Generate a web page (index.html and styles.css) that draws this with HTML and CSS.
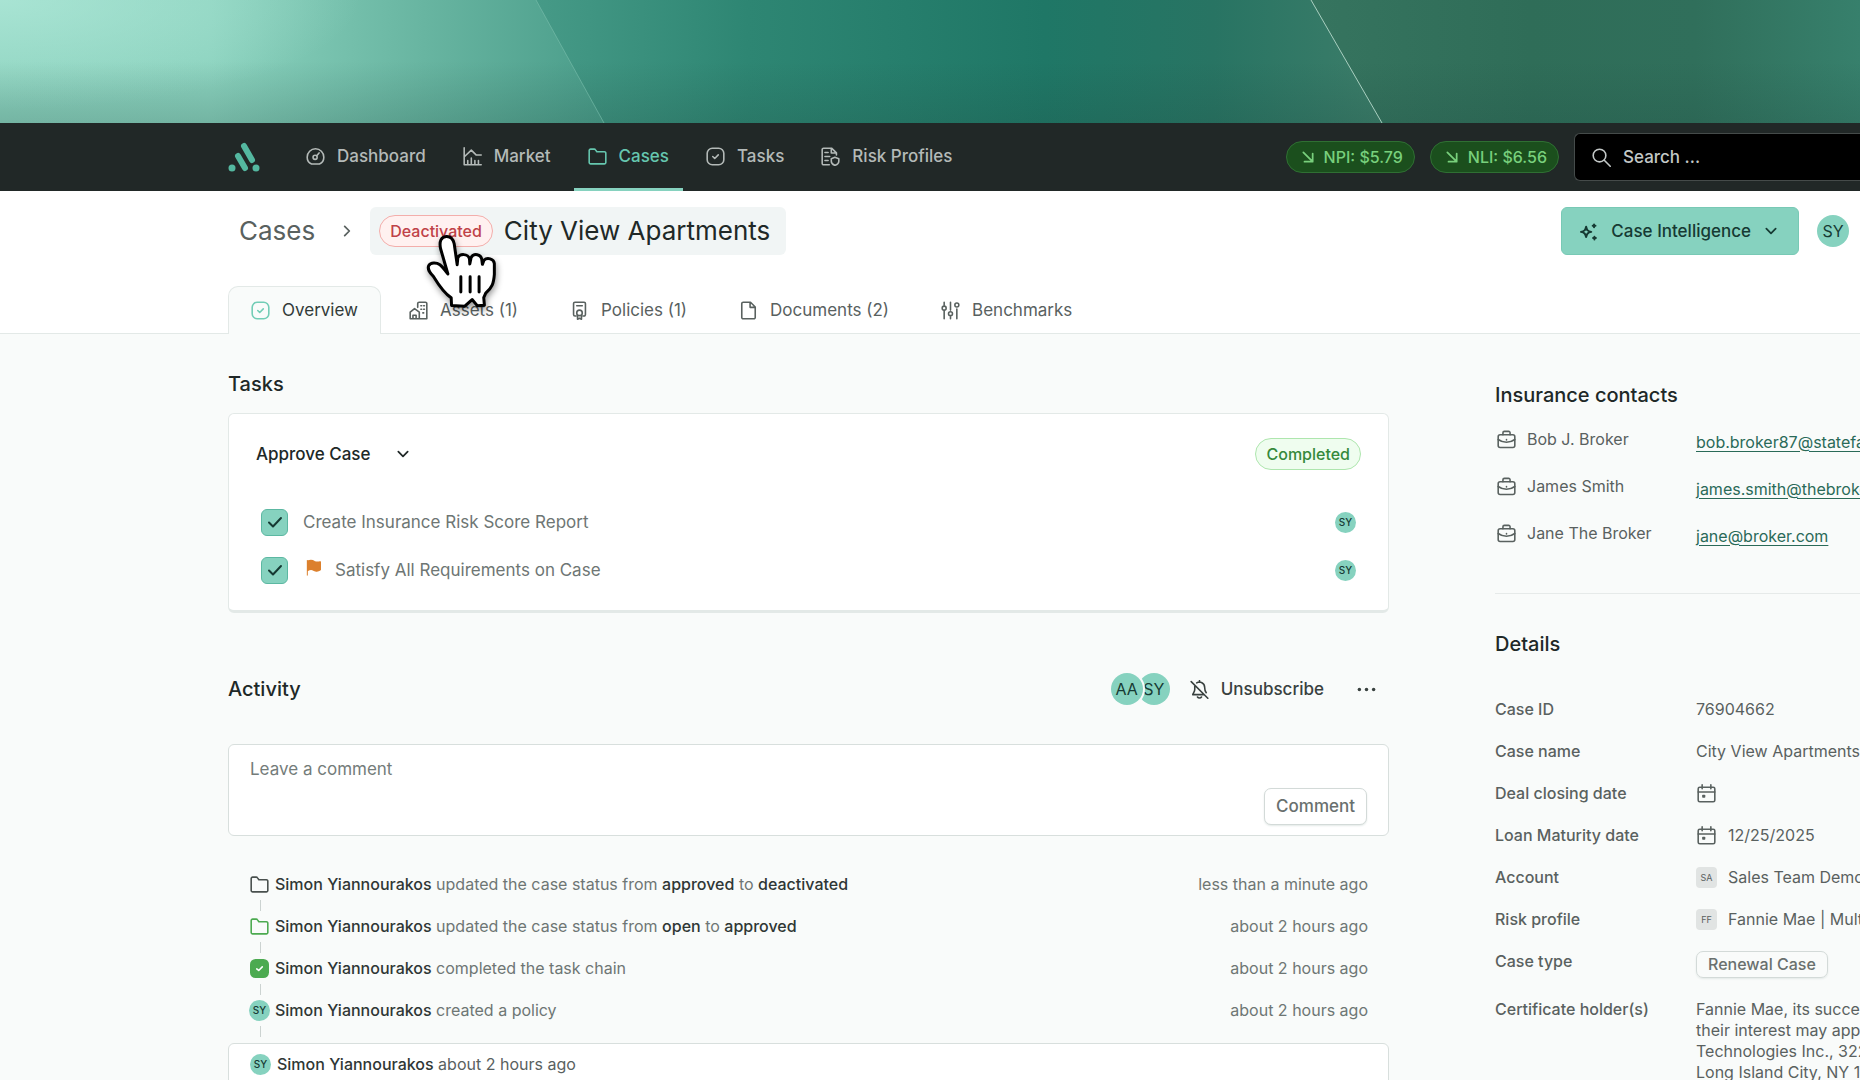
FILE: index.html
```html
<!DOCTYPE html>
<html lang="en">
<head>
    <meta charset="UTF-8">
    <meta name="viewport" content="width=device-width, initial-scale=1.0">
    <title>City View Apartments</title>
    <link rel="stylesheet" href="styles.css">
</head>
<body>
    <svg class="sprite" aria-hidden="true">
        <symbol id="gauge" viewBox="0 0 24 24"><path d="M7 21.5h10a9.5 9.5 0 0 0 5.5-8.700A10.500 10.500 0 0 0 1.500 12.800a9.500 9.500 0 0 0 5.500 8.700z"/><circle cx="11.500" cy="13" r="2.600"/><path d="M13.500 11l3-3.500"/></symbol>
        <symbol id="market" viewBox="0 0 24 24"><path d="M1.500 1v21.500H23M2 12l8.500-8 6 6H23M6 22v-5M10.500 22v-8M15 22v-5M19.500 22v-5"/></symbol>
        <symbol id="folder" viewBox="0 0 24 24"><path d="M1.500 19.500v-15a1.800 1.800 0 0 1 1.800-1.800h4.500a2 2 0 0 1 1.700.900l1.700 2.400h9.500a1.800 1.800 0 0 1 1.800 1.800v11.700a1.800 1.800 0 0 1-1.800 1.800H3.300a1.800 1.800 0 0 1-1.800-1.800z"/></symbol>
        <symbol id="check-box" viewBox="0 0 24 24"><rect x="1.500" y="1.500" width="21" height="21" rx="6.500"/><path d="M8.500 12l2.500 2.500 4.500-4.500"/></symbol>
        <symbol id="risk" viewBox="0 0 24 24"><path d="M10.500 22.500H3.300a1.800 1.800 0 0 1-1.800-1.800V3.300a1.800 1.800 0 0 1 1.800-1.800h10L19.500 7.500V10M13 2v5.500h6M5 7h4M5 12h6M5 17h4M17.500 13l5 1.700v3.300c0 2.500-2 4.200-5 5.200-3-1-4.500-2.700-4.500-5.200v-3.300z"/></symbol>
        <symbol id="arrow" viewBox="0 0 24 24"><path d="M4 4l16 16M20 6v14H6"/></symbol>
        <symbol id="search" viewBox="0 0 24 24"><circle cx="9.500" cy="9.500" r="8"/><path d="M15.500 15.500l7.500 7.500"/></symbol>
        <symbol id="chevron-right" viewBox="0 0 24 24"><path d="M8 4l8 8-8 8"/></symbol>
        <symbol id="chevron-down" viewBox="0 0 24 24"><path d="M4 8l8 8 8-8"/></symbol>
        <symbol id="sparkle" viewBox="0 0 24 24"><path d="M9 6c1 4.500 2 5.500 6.500 6.500C11 13.500 10 14.500 9 19c-1-4.500-2-5.500-6.500-6.500C7 11.500 8 10.500 9 6z" stroke-width="2.500"/><path d="M19 3v3.500M17.300 4.800h3.500M19.500 18.500v3.500M17.800 20.300h3.500" stroke-width="2.500"/></symbol>
        <symbol id="buildings" viewBox="0 0 24 24"><path d="M11 8V3.300a1.800 1.800 0 0 1 1.800-1.800h7.900a1.800 1.800 0 0 1 1.800 1.800v19.200h-21V14l5.500-4.500L13 14v8.500M5 22v-4h4v4"/><path d="M15 6h1M18.500 6h1M15 10.500h1M18.500 10.500h1M17.500 15h1"/></symbol>
        <symbol id="policy" viewBox="0 0 24 24"><path d="M7.500 19H6.300a1.800 1.800 0 0 1-1.800-1.800V3.300a1.800 1.800 0 0 1 1.800-1.800h11.400a1.800 1.800 0 0 1 1.800 1.800v13.900a1.800 1.800 0 0 1-1.800 1.800H16.500M8.500 6h7M9.500 18V23l2.500-1.300 2.500 1.300v-5"/><circle cx="12" cy="15" r="3.500"/></symbol>
        <symbol id="document" viewBox="0 0 24 24"><path d="M3.500 20.700V3.300a1.800 1.800 0 0 1 1.800-1.800h9.200l6 6v13.200a1.800 1.800 0 0 1-1.800 1.800H5.300a1.800 1.800 0 0 1-1.800-1.800zM14 2v6h6"/></symbol>
        <symbol id="sliders" viewBox="0 0 24 24"><path d="M4 1.500v4M4 12.500v10M12 1.500v10M12 20v2.500M20 10v12.500"/><circle cx="4" cy="9" r="2.500"/><circle cx="12" cy="16" r="2.500"/><circle cx="20" cy="5" r="2.500"/></symbol>
        <symbol id="flag" viewBox="0 0 24 24"><path d="M2 23.500V1.500" stroke-width="1.500"/><path d="M2.500 2.500c5-2.500 8-1 10 .500 2 1.300 5 1.500 9 .500v12c-4 3-7.500 2-10 .500S6.500 14 2.500 16.500z" fill="currentColor"/></symbol>
        <symbol id="bell-off" viewBox="0 0 24 24"><path d="M1.500 2l21 21M6 7.500V12c0 3-2 4.500-2.500 6.500H17M8.500 3.700A6.500 6.500 0 0 1 18.500 9c0 3.500.500 5 2 7M12 .800v2M9.500 21.500a3 3 0 0 0 5 0"/></symbol>
        <symbol id="dots" viewBox="0 0 24 24"><g fill="currentColor" stroke="none"><circle cx="3" cy="12" r="2.200"/><circle cx="12" cy="12" r="2.200"/><circle cx="21" cy="12" r="2.200"/></g></symbol>
        <symbol id="briefcase" viewBox="0 0 24 24"><rect x="1.500" y="6" width="21" height="16" rx="2.500"/><path d="M7.500 6V3.500A1.800 1.800 0 0 1 9.300 1.700h5.400a1.800 1.800 0 0 1 1.800 1.800V6M1.500 12c6 4.500 15 4.500 21 0M12 12v.500"/></symbol>
        <symbol id="calendar" viewBox="0 0 24 24"><rect x="1.500" y="4" width="21" height="18.500" rx="2"/><path d="M1.500 10h21M6.500 1v5M17.500 1v5"/><path d="M7.500 14.500h2v2h-2z" fill="currentColor"/></symbol>
        <symbol id="done" viewBox="0 0 24 24"><rect width="24" height="24" rx="7" fill="#4caa50" stroke="none"/><path d="M8.500 12.500l2.500 2 4.500-4.500" stroke="#fff"/></symbol>
    </svg>

    <div class="banner">
        <svg class="banner-art" viewBox="0 0 1860 123" preserveAspectRatio="none" aria-hidden="true">
            <defs>
                <linearGradient id="light" x1="0" x2="1">
                    <stop offset="0" stop-color="#8dd3bf"/>
                    <stop offset="0.35" stop-color="#8bd2be"/>
                    <stop offset="0.7" stop-color="#68b5a1"/>
                    <stop offset="1" stop-color="#4a9d8a"/>
                </linearGradient>
                <linearGradient id="mid" x1="0" x2="1">
                    <stop offset="0" stop-color="#469a87"/>
                    <stop offset="0.25" stop-color="#2e8673"/>
                    <stop offset="0.6" stop-color="#1f7766"/>
                    <stop offset="0.8" stop-color="#287463"/>
                    <stop offset="1" stop-color="#3c7d69"/>
                </linearGradient>
                <linearGradient id="dark" x1="0" x2="1">
                    <stop offset="0" stop-color="#36745f"/>
                    <stop offset="0.4" stop-color="#2f6d58"/>
                    <stop offset="0.7" stop-color="#306f5b"/>
                    <stop offset="1" stop-color="#37806c"/>
                </linearGradient>
                <linearGradient id="shade" x1="0" y1="0" x2="0" y2="1">
                    <stop offset="0.5" stop-color="#1d4a40" stop-opacity="0"/>
                    <stop offset="1" stop-color="#1d4a40" stop-opacity="0.22"/>
                </linearGradient>
                <radialGradient id="glow" cx="0" cy="0" r="1">
                    <stop offset="0" stop-color="#b4ebdc" stop-opacity="0.7"/>
                    <stop offset="1" stop-color="#b4ebdc" stop-opacity="0"/>
                </radialGradient>
            </defs>
            <path d="M0 0H537L605 123H0z" fill="url(#light)"/>
            <path d="M536 0H1312L1383 123H604z" fill="url(#mid)"/>
            <path d="M1311 0H1860V123H1382z" fill="url(#dark)"/>
            <rect width="360" height="110" fill="url(#glow)"/>
            <rect width="1860" height="123" fill="url(#shade)"/>
            <path d="M536 0L604 123" stroke="#7cc0ae" stroke-opacity="0.6"/>
            <path d="M1311 0L1382 123" stroke="#a9cfc0"/>
        </svg>
    </div>

    <header class="topbar">
        <a class="logo" href="#" aria-label="Home">
            <svg viewBox="0 0 32 30" aria-hidden="true">
                <path d="M16 4l8 14M10 14l7 12" stroke="#54b8a0" stroke-width="6" stroke-linecap="round"/>
                <circle cx="4" cy="26" r="3.500" fill="#54b8a0"/>
                <circle cx="28" cy="26" r="3.500" fill="#54b8a0"/>
            </svg>
        </a>
        <nav class="nav">
            <a class="nav-link" href="#"><svg class="icon"><use href="#gauge"/></svg>Dashboard</a>
            <a class="nav-link" href="#"><svg class="icon"><use href="#market"/></svg>Market</a>
            <a class="nav-link active" href="#"><svg class="icon"><use href="#folder"/></svg>Cases</a>
            <a class="nav-link" href="#"><svg class="icon"><use href="#check-box"/></svg>Tasks</a>
            <a class="nav-link" href="#"><svg class="icon"><use href="#risk"/></svg>Risk Profiles</a>
        </nav>
        <div class="topbar-right">
            <span class="rate"><svg class="icon small"><use href="#arrow"/></svg>NPI: $5.79</span>
            <span class="rate"><svg class="icon small"><use href="#arrow"/></svg>NLI: $6.56</span>
            <label class="search">
                <svg class="icon"><use href="#search"/></svg>
                <input type="search" placeholder="Search ..." aria-label="Search">
            </label>
        </div>
    </header>

    <div class="page-head">
        <div class="title-row">
            <a class="crumb" href="#">Cases</a>
            <svg class="icon small"><use href="#chevron-right"/></svg>
            <div class="title-chip">
                <span class="status status-red">Deactivated</span>
                <h1>City View Apartments</h1>
            </div>
            <button class="intel"><svg class="icon"><use href="#sparkle"/></svg>Case Intelligence<svg class="icon small"><use href="#chevron-down"/></svg></button>
            <span class="avatar">SY</span>
        </div>
        <nav class="tabs">
            <a class="tab active" href="#"><svg class="icon"><use href="#check-box"/></svg>Overview</a>
            <a class="tab" href="#"><svg class="icon"><use href="#buildings"/></svg>Assets (1)</a>
            <a class="tab" href="#"><svg class="icon"><use href="#policy"/></svg>Policies (1)</a>
            <a class="tab" href="#"><svg class="icon"><use href="#document"/></svg>Documents (2)</a>
            <a class="tab" href="#"><svg class="icon"><use href="#sliders"/></svg>Benchmarks</a>
        </nav>
    </div>

    <div class="content">
        <main class="main">
            <h2>Tasks</h2>
            <section class="card">
                <div class="card-head">
                    <button class="toggle">Approve Case<svg class="icon small"><use href="#chevron-down"/></svg></button>
                    <span class="status status-green">Completed</span>
                </div>
                <div class="task">
                    <input type="checkbox" id="task-report" checked>
                    <label for="task-report">Create Insurance Risk Score Report</label>
                    <span class="avatar mini">SY</span>
                </div>
                <div class="task">
                    <input type="checkbox" id="task-requirements" checked>
                    <label for="task-requirements"><svg class="icon flag"><use href="#flag"/></svg>Satisfy All Requirements on Case</label>
                    <span class="avatar mini">SY</span>
                </div>
            </section>

            <div class="activity-head">
                <h2>Activity</h2>
                <div class="people">
                    <span class="avatar front">AA</span>
                    <span class="avatar back">SY</span>
                </div>
                <button class="plain"><svg class="icon"><use href="#bell-off"/></svg>Unsubscribe</button>
                <button class="plain" aria-label="More"><svg class="icon"><use href="#dots"/></svg></button>
            </div>

            <form class="comment">
                <textarea rows="1" placeholder="Leave a comment" aria-label="Leave a comment"></textarea>
                <button type="button" class="outline">Comment</button>
            </form>

            <ul class="feed">
                <li>
                    <span class="feed-icon"><svg class="icon"><use href="#folder"/></svg></span>
                    <span class="feed-text"><b>Simon Yiannourakos</b> updated the case status from <b>approved</b> to <b>deactivated</b></span>
                    <time>less than a minute ago</time>
                </li>
                <li>
                    <span class="feed-icon green"><svg class="icon"><use href="#folder"/></svg></span>
                    <span class="feed-text"><b>Simon Yiannourakos</b> updated the case status from <b>open</b> to <b>approved</b></span>
                    <time>about 2 hours ago</time>
                </li>
                <li>
                    <span class="feed-icon"><svg class="icon"><use href="#done"/></svg></span>
                    <span class="feed-text"><b>Simon Yiannourakos</b> completed the task chain</span>
                    <time>about 2 hours ago</time>
                </li>
                <li>
                    <span class="feed-icon"><span class="avatar mini">SY</span></span>
                    <span class="feed-text"><b>Simon Yiannourakos</b> created a policy</span>
                    <time>about 2 hours ago</time>
                </li>
            </ul>
            <article class="post">
                <span class="avatar mini">SY</span>
                <span class="feed-text"><b>Simon Yiannourakos</b> about 2 hours ago</span>
            </article>
        </main>

        <aside class="aside">
            <section class="contacts">
                <h2>Insurance contacts</h2>
                <div class="contact"><svg class="icon"><use href="#briefcase"/></svg><span>Bob J. Broker</span><a href="#">bob.broker87@statefarm.com</a></div>
                <div class="contact"><svg class="icon"><use href="#briefcase"/></svg><span>James Smith</span><a href="#">james.smith@thebroker.com</a></div>
                <div class="contact"><svg class="icon"><use href="#briefcase"/></svg><span>Jane The Broker</span><a href="#">jane@broker.com</a></div>
            </section>
            <section class="details">
                <h2>Details</h2>
                <dl>
                    <dt>Case ID</dt>
                    <dd>76904662</dd>
                    <dt>Case name</dt>
                    <dd>City View Apartments</dd>
                    <dt>Deal closing date</dt>
                    <dd><svg class="icon"><use href="#calendar"/></svg></dd>
                    <dt>Loan Maturity date</dt>
                    <dd><svg class="icon"><use href="#calendar"/></svg>12/25/2025</dd>
                    <dt>Account</dt>
                    <dd><span class="tile">SA</span>Sales Team Demo</dd>
                    <dt>Risk profile</dt>
                    <dd><span class="tile">FF</span>Fannie Mae | Multifamily</dd>
                    <dt>Case type</dt>
                    <dd class="type"><button class="outline tag">Renewal Case</button></dd>
                    <dt>Certificate holder(s)</dt>
                    <dd class="holder">Fannie Mae, its successors<br>their interest may appear<br>Technologies Inc., 322<br>Long Island City, NY 11101</dd>
                </dl>
            </section>
        </aside>
    </div>

    <svg class="cursor" viewBox="645 110 220 240" aria-hidden="true">
        <path d="M714 236L692 160C687 137 694 124 709 123C723 122 730 131 733 145L742 208L744 187C750 174 774 174 779 190L780 206L784 186C792 172 814 176 816 192L818 207L823 194C832 186 853 189 854 205V237C852 266 846 278 828 294L822 307L824 330L803 332L787 313L765 333L725 331L724 308C702 294 684 266 670 243C658 230 652 222 656 211C662 200 680 201 690 208C700 215 706 228 714 236z" fill="#fff" stroke="#000" stroke-width="9" stroke-linejoin="round"/>
        <path d="M753 244V290M781 244V290M808 244V290" stroke="#000" stroke-width="9" stroke-linecap="round"/>
    </svg>
</body>
</html>
```
FILE: styles.css
```css
* {
    box-sizing: border-box;
}

body {
    margin: 0;
    position: relative;
    height: 100vh;
    overflow: hidden;
    font-family: Inter, 'Liberation Sans', sans-serif;
    font-size: 16px;
    line-height: 21px;
    color: #59615f;
    background-color: #f9fbfa;
    white-space: nowrap;
}

a {
    color: inherit;
    text-decoration: none;
}

button {
    font: inherit;
    color: inherit;
    border: none;
    background: none;
    padding: 0;
    cursor: pointer;
}

h1, h2 {
    margin: 0;
    color: #202827;
}

h2 {
    font-size: 20px;
    line-height: 24px;
    font-weight: 500;
}

.sprite {
    display: none;
}

.icon {
    width: 19px;
    height: 19px;
    flex: none;
    fill: none;
    stroke: currentColor;
    stroke-width: 2;
    stroke-linecap: round;
    stroke-linejoin: round;
}

.icon.small {
    width: 14px;
    height: 14px;
    stroke-width: 3;
}

/* banner */
.banner {
    height: 123px;
}

.banner-art {
    display: block;
    width: 100%;
    height: 100%;
}

/* top bar */
.topbar {
    display: flex;
    align-items: center;
    height: 68px;
    padding-left: 228px;
    background-color: #212827;
}

.logo {
    width: 32px;
    height: 30px;
    margin-right: 32px;
}

.nav {
    display: flex;
    align-self: stretch;
    gap: 9px;
}

.nav-link {
    display: flex;
    align-items: center;
    gap: 12px;
    padding: 2px 14px 0;
    font-size: 17px;
    font-weight: 500;
    color: #b4bab8;
    border-bottom: 3px solid transparent;
}

.nav-link.active {
    color: #66c7af;
    border-bottom-color: #86d2bf;
}

.topbar-right {
    display: flex;
    align-items: center;
    gap: 15px;
    margin-left: auto;
}

.rate {
    display: flex;
    align-items: center;
    gap: 9px;
    height: 32px;
    padding: 0 11px 0 14px;
    font-weight: 500;
    color: #78d07c;
    background-color: #1b4f1d;
    border: 1px solid #2f6f33;
    border-radius: 16px;
}

.search {
    display: flex;
    align-items: center;
    gap: 12px;
    width: 286px;
    height: 48px;
    padding-left: 17px;
    color: #c3c8c7;
    background-color: #000;
    border: 1px solid #454b4a;
    border-right: none;
    border-radius: 6px 0 0 6px;
}

.search input {
    flex: 1;
    min-width: 0;
    padding: 0;
    font: 500 17px Inter, sans-serif;
    color: #fff;
    background: none;
    border: none;
    outline: none;
}

.search input::placeholder {
    color: #c3c8c7;
}

/* title and tabs */
.page-head {
    background-color: #fff;
    border-bottom: 1px solid #e3e9e7;
}

.title-row {
    display: flex;
    align-items: center;
    padding: 16px 11px 0 239px;
}

.crumb {
    margin-right: 25px;
    font-size: 26px;
    line-height: 32px;
}

.title-chip {
    display: flex;
    align-items: center;
    gap: 11px;
    height: 48px;
    margin-left: 16px;
    padding: 0 16px 0 9px;
    background-color: #f1f5f5;
    border-radius: 6px;
}

.title-chip h1 {
    font-size: 26px;
    line-height: 32px;
    font-weight: 400;
}

.status {
    height: 32px;
    padding: 0 10px;
    font-weight: 500;
    line-height: 30px;
    border: 1px solid;
    border-radius: 16px;
}

.status-red {
    color: #bf4248;
    background-color: #fff1f0;
    border-color: #f3aeab;
}

.status-green {
    color: #35893b;
    background-color: #effdef;
    border-color: #aee6ae;
}

.intel {
    display: flex;
    align-items: center;
    gap: 13px;
    height: 48px;
    margin-left: auto;
    margin-right: 18px;
    padding: 0 20px 0 17px;
    font-size: 17px;
    font-weight: 500;
    color: #163a33;
    background-color: #86d2bf;
    border: 1px solid #78c9b5;
    border-radius: 6px;
}

.avatar {
    width: 32px;
    height: 32px;
    flex: none;
    font-size: 16px;
    line-height: 32px;
    text-align: center;
    color: #163a33;
    background-color: #86d2bf;
    border-radius: 50%;
}

.avatar.mini {
    width: 21px;
    height: 21px;
    font-size: 10px;
    font-weight: 500;
    line-height: 21px;
}

.tabs {
    display: flex;
    padding: 31px 0 0 228px;
}

.tab {
    display: flex;
    align-items: center;
    gap: 12px;
    height: 47px;
    padding: 2px 24px 0 28px;
    font-size: 17px;
}

.tab.active {
    padding: 0 22px;
    margin-bottom: -1px;
    color: #313a38;
    background-color: #f9fbfa;
    border: 1px solid #e3e9e7;
    border-bottom: none;
    border-radius: 10px 10px 0 0;
    height: 48px;
}

.tab.active .icon {
    color: #72cdb6;
}

/* columns */
.content {
    display: flex;
    gap: 106px;
    padding-left: 228px;
}

.main {
    flex: 1;
    min-width: 0;
    padding-top: 38px;
}

.aside {
    width: 365px;
    padding-top: 49px;
}

/* tasks */
.card {
    margin-top: 17px;
    padding: 24px 27px 16px;
    background-color: #fff;
    border: 1px solid #e3e9e7;
    border-bottom-width: 3px;
    border-radius: 6px;
}

.card-head {
    display: flex;
    align-items: center;
    justify-content: space-between;
    margin-bottom: 28px;
}

.toggle {
    display: flex;
    align-items: center;
    gap: 25px;
    font-size: 17px;
    font-weight: 500;
    color: #202827;
}

.task {
    display: flex;
    align-items: center;
    height: 48px;
    padding: 0 5px;
    font-size: 17px;
    color: #6e7674;
}

.task input {
    appearance: none;
    width: 27px;
    height: 27px;
    margin: 0 15px 0 0;
    background: #86d2bf url("data:image/svg+xml,%3Csvg xmlns='http://www.w3.org/2000/svg' viewBox='0 0 24 24' fill='none' stroke='%23163a33' stroke-width='2' stroke-linecap='round' stroke-linejoin='round'%3E%3Cpath d='M6 12.500l4 4 8-8.500'/%3E%3C/svg%3E") center / 24px no-repeat;
    border: 1px solid #5cb8a2;
    border-radius: 6px;
}

.task label {
    display: flex;
    align-items: center;
    flex: 1;
    gap: 12px;
}

.icon.flag {
    width: 16px;
    height: 17px;
    margin: 0 1px 5px 3px;
    color: #dc802d;
}

/* activity */
.activity-head {
    display: flex;
    align-items: center;
    gap: 20px;
    margin-top: 60px;
    padding-right: 13px;
}

.people {
    display: flex;
    margin-left: auto;
}

.people .front {
    z-index: 1;
    box-shadow: 0 0 0 2px #f9fbfa;
}

.people .back {
    margin-left: -5px;
}

.plain {
    display: flex;
    align-items: center;
    gap: 12px;
    font-size: 17px;
    font-weight: 500;
    color: #39413f;
}

.plain + .plain {
    margin-left: 13px;
}

.comment {
    display: flex;
    flex-direction: column;
    height: 92px;
    margin-top: 39px;
    padding: 12px 21px 10px;
    background-color: #fff;
    border: 1px solid #d8dfdd;
    border-radius: 6px;
}

.comment textarea {
    flex: 1;
    padding: 0;
    font: 17px/24px Inter, sans-serif;
    border: none;
    outline: none;
    resize: none;
}

.comment textarea::placeholder {
    color: #747c7a;
}

.outline {
    align-self: flex-end;
    height: 37px;
    padding: 0 11px;
    font-size: 17px;
    font-weight: 500;
    color: #69706e;
    background-color: #fff;
    border: 1px solid #d3dad8;
    border-radius: 7px;
    box-shadow: 0 1px 2px #e3e9e7;
}

.feed {
    margin: 27px 0 12px;
    padding: 0 21px;
    list-style: none;
    color: #6e7674;
}

.feed li {
    position: relative;
    display: flex;
    align-items: center;
    height: 42px;
}

.feed li::after {
    content: '';
    position: absolute;
    left: 11px;
    bottom: -6px;
    height: 11px;
    border-left: 1px solid #ccd3d1;
}

.feed-icon {
    display: flex;
    justify-content: center;
    width: 21px;
    margin-right: 5px;
    color: #49504e;
}

.feed-icon.green {
    color: #4caa50;
}

.feed-text b {
    font-weight: 500;
    color: #2f3735;
}

.feed time {
    margin-left: auto;
}

.post {
    display: flex;
    gap: 6px;
    padding: 10px 21px;
    height: 60px;
    background-color: #fff;
    border: 1px solid #d8dfdd;
    border-radius: 6px;
}

/* side column */
.contacts {
    padding-bottom: 36px;
    border-bottom: 1px solid #e6eae9;
}

.contacts h2 {
    margin-bottom: 9px;
}

.contact {
    display: flex;
    align-items: center;
    height: 47px;
}

.contact .icon {
    margin: 0 11px 0 2px;
}

.contact span {
    flex: none;
    width: 169px;
}

.contact a {
    padding-top: 5px;
    color: #2a6a58;
    text-decoration: underline;
    text-underline-offset: 3px;
}

.details {
    padding-top: 38px;
}

.details dl {
    display: grid;
    grid-template-columns: 201px 1fr;
    margin: 32px 0 0;
}

.details dt {
    line-height: 42px;
    font-weight: 500;
}

.details dd {
    display: flex;
    align-items: center;
    gap: 11px;
    margin: 0;
}

.details dd .icon {
    margin: 0 1px;
}

.tile {
    flex: none;
    width: 21px;
    height: 21px;
    font-size: 9px;
    text-align: center;
    background-color: #e1e4e3;
    border-radius: 4px;
}

.details .type {
    height: 48px;
}

.details .tag {
    align-self: center;
    height: 27px;
    font-size: 16px;
    background: none;
}

.details .holder {
    display: block;
    padding-top: 11px;
}

/* pointer */
.cursor {
    position: absolute;
    left: 425px;
    top: 232px;
    width: 73px;
    height: 80px;
    fill: none;
    filter: drop-shadow(1px 3px 3px rgba(0, 0, 0, 0.4));
}
```
